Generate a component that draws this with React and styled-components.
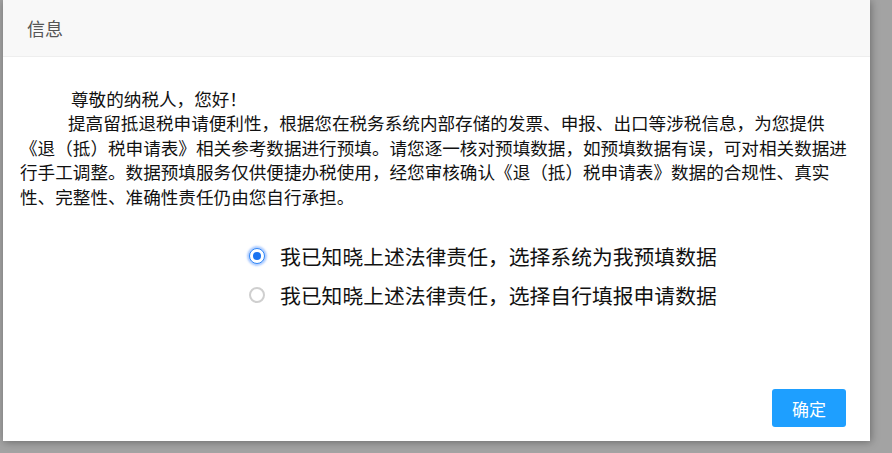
import React, { useState } from "react";
import styled, { createGlobalStyle } from "styled-components";

const Global = createGlobalStyle`
  html, body { margin: 0; padding: 0; }
  body {
    width: 892px;
    height: 453px;
    overflow: hidden;
    background: #a3a3a3;
    font-family: "Noto Sans CJK SC", "Noto Sans", sans-serif;
  }
`;

const Backdrop = styled.div`
  width: 892px;
  height: 453px;
  padding: 0 0 0 3px;
  box-sizing: border-box;
`;

const Dialog = styled.div`
  width: 867px;
  height: 441px;
  background: #fff;
  display: flex;
  flex-direction: column;
  box-shadow: 1px 1px 8px rgba(0, 0, 0, 0.35);
`;

const TitleBar = styled.div`
  height: 57px;
  flex: none;
  background: #f8f8f8;
  border-bottom: 1px solid #eeeeee;
  box-sizing: border-box;
  display: flex;
  align-items: center;
  padding: 0 0 0 24px;
  font-size: 18px;
  color: #555;
`;

const Body = styled.div`
  flex: 1;
  padding: 30px 15px 0 17px;
  display: flex;
  flex-direction: column;
`;

const Para = styled.p`
  margin: 0;
  width: 835px;
  font-size: 17.6px;
  line-height: 24.4px;
  color: #111;
  text-indent: ${(p) => p.$indent}px;
`;

const Options = styled.div`
  margin: 32px 0 0 229px;
  display: flex;
  flex-direction: column;
  gap: 9px;
`;

const Option = styled.label`
  display: flex;
  align-items: center;
  height: 30px;
  font-size: 20.8px;
  color: #111;
  cursor: pointer;
`;

const Radio = styled.span`
  width: 16px;
  height: 16px;
  box-sizing: border-box;
  border-radius: 50%;
  margin: 0 15px 0 0;
  flex: none;
  display: flex;
  align-items: center;
  justify-content: center;
  border: ${(p) => (p.$checked ? "1.5px solid #2f86f6" : "2px solid #cfcfcf")};
  background: #fff;
  box-shadow: ${(p) => (p.$checked ? "0 0 2px 2px rgba(77, 144, 254, 0.45)" : "none")};
  &::after {
    content: "";
    width: 8px;
    height: 8px;
    border-radius: 50%;
    background: ${(p) => (p.$checked ? "#1a73f0" : "transparent")};
  }
`;

const Footer = styled.div`
  flex: none;
  display: flex;
  justify-content: flex-end;
  padding: 0 24px 14px 0;
`;

const Button = styled.button`
  width: 74px;
  height: 38px;
  border: none;
  border-radius: 3px;
  background: #1e9fff;
  color: #fff;
  font-family: inherit;
  font-size: 17px;
  cursor: pointer;
`;

export default function App() {
  const [choice, setChoice] = useState(0);
  const options = [
    "我已知晓上述法律责任，选择系统为我预填数据",
    "我已知晓上述法律责任，选择自行填报申请数据",
  ];
  return (
    <>
      <Global />
      <Backdrop>
        <Dialog>
          <TitleBar>信息</TitleBar>
          <Body>
            <Para $indent={51}>尊敬的纳税人，您好！</Para>
            <Para $indent={48}>
              提高留抵退税申请便利性，根据您在税务系统内部存储的发票、申报、出口等涉税信息，为您提供《退（抵）税申请表》相关参考数据进行预填。请您逐一核对预填数据，如预填数据有误，可对相关数据进行手工调整。数据预填服务仅供便捷办税使用，经您审核确认《退（抵）税申请表》数据的合规性、真实性、完整性、准确性责任仍由您自行承担。
            </Para>
            <Options>
              {options.map((t, i) => (
                <Option key={i} onClick={() => setChoice(i)}>
                  <Radio $checked={choice === i} />
                  {t}
                </Option>
              ))}
            </Options>
          </Body>
          <Footer>
            <Button>确定</Button>
          </Footer>
        </Dialog>
      </Backdrop>
    </>
  );
}
